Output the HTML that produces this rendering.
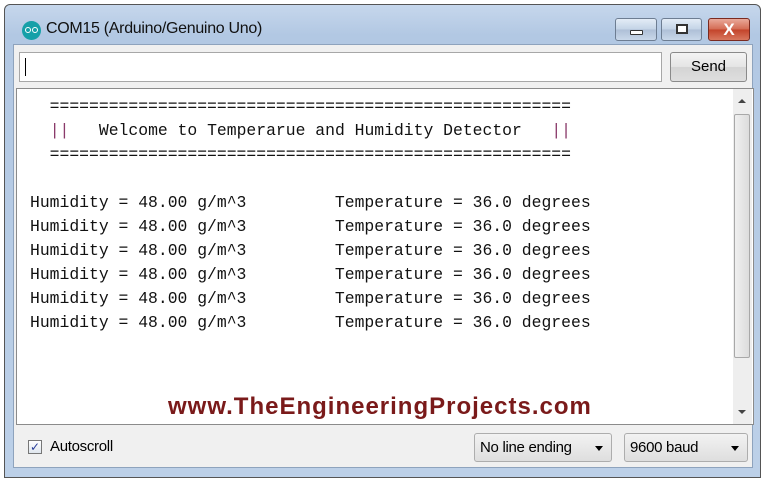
<!DOCTYPE html>
<html><head><style>
body{margin:0;width:768px;height:484px;background:#fff;position:relative;overflow:hidden;font-family:"Liberation Sans",sans-serif}
.abs{position:absolute;box-sizing:border-box}
.win{left:4px;top:4px;width:757px;height:474px;border:1px solid #555;border-radius:6px 6px 0 0;background:linear-gradient(#c6d7ec,#b2c8e3 30px,#bcd0e8);}
.inner{left:13px;top:44px;width:740px;height:424px;background:#f0f0f0;border:1px solid #8ea3bd}
.mono{font-family:"Liberation Mono",monospace;font-size:16.4px;line-height:24px;white-space:pre;color:#111}
.tb{height:23px;top:18px;border:1px solid #6d7d92;border-radius:3px;background:linear-gradient(#e3ecf6,#c3d3e6 50%,#aebfd6 51%,#c9d8ea)}
.dd{top:433px;height:29px;border:1px solid #adadad;border-radius:3px;background:linear-gradient(#f2f2f2,#dedede);font-size:15px;line-height:27px;padding-left:5px}
.dd:after{content:"";position:absolute;right:8px;top:12px;border:4px solid transparent;border-top:5px solid #000}
</style></head><body>
<div class="abs win"></div>
<div class="abs" style="left:22px;top:21px;width:19px;height:19px;border-radius:50%;background:#16a0a8"></div>
<div class="abs" style="left:25px;top:27px;width:6px;height:6px;border:1.5px solid #fff;border-radius:50%"></div>
<div class="abs" style="left:32px;top:27px;width:6px;height:6px;border:1.5px solid #fff;border-radius:50%"></div>
<div class="abs" style="left:46px;top:20px;font-size:16px;color:#111;letter-spacing:-0.3px">COM15 (Arduino/Genuino Uno)</div>
<div class="abs tb" style="left:615px;width:42px"><div class="abs" style="left:14px;top:11px;width:13px;height:5px;border:1px solid #333;background:#fff;border-radius:1px"></div></div>
<div class="abs tb" style="left:661px;width:41px"><div class="abs" style="left:14px;top:5px;width:12px;height:10px;border:2px solid #333;background:#fff"></div></div>
<div class="abs tb" style="left:708px;width:42px;border-color:#7a2a20;background:linear-gradient(#e9a99a,#d36a52 50%,#c3432a 51%,#d8775e);color:#fff;font-weight:bold;font-size:17px;text-align:center;line-height:21px">X</div>
<div class="abs inner"></div>
<div class="abs" style="left:19px;top:52px;width:643px;height:30px;background:#fff;border:1px solid #a7a7a7"></div>
<div class="abs" style="left:25px;top:58px;width:1px;height:18px;background:#000"></div>
<div class="abs" style="left:670px;top:52px;width:77px;height:30px;border:1px solid #8a8a8a;border-radius:3px;background:linear-gradient(#f4f4f4,#e4e4e4 50%,#d4d4d4 51%,#dedede);font-size:15px;text-align:center;line-height:28px">Send</div>
<div class="abs" style="left:16px;top:88px;width:738px;height:337px;background:#fff;border:1px solid #8b8b8b"></div>
<div class="abs" style="left:733px;top:89px;width:19px;height:335px;background:#eee"></div>
<div class="abs" style="left:734px;top:114px;width:16px;height:244px;background:linear-gradient(90deg,#f0f0f0,#dcdcdc);border:1px solid #a8a8a8;border-radius:2px"></div>
<div class="abs" style="left:738px;top:99px;border:4px solid transparent;border-bottom:4px solid #444;border-top:0"></div>
<div class="abs" style="left:738px;top:410px;border:4px solid transparent;border-top:4px solid #444;border-bottom:0"></div>
<div class="abs mono" style="left:30px;top:95px">  =====================================================
  <span style="color:#8a3a6a">||</span>   Welcome to Temperarue and Humidity Detector   <span style="color:#8a3a6a">||</span>
  =====================================================

Humidity = 48.00 g/m^3         Temperature = 36.0 degrees
Humidity = 48.00 g/m^3         Temperature = 36.0 degrees
Humidity = 48.00 g/m^3         Temperature = 36.0 degrees
Humidity = 48.00 g/m^3         Temperature = 36.0 degrees
Humidity = 48.00 g/m^3         Temperature = 36.0 degrees
Humidity = 48.00 g/m^3         Temperature = 36.0 degrees</div>
<div class="abs" style="left:168px;top:393px;font-weight:bold;font-size:24px;letter-spacing:1px;color:#7a1a1a;white-space:nowrap">www.TheEngineeringProjects.com</div>
<div class="abs" style="left:28px;top:440px;width:14px;height:14px;border:1px solid #777;background:linear-gradient(#fff,#dfe6ee);color:#2a3f9a;font-size:12px;line-height:12px;text-align:center">✓</div>
<div class="abs" style="left:50px;top:438px;font-size:15px;letter-spacing:-0.3px">Autoscroll</div>
<div class="abs dd" style="left:474px;width:138px;letter-spacing:-0.3px">No line ending</div>
<div class="abs dd" style="left:624px;width:124px;letter-spacing:-0.3px">9600 baud</div>
</body></html>
